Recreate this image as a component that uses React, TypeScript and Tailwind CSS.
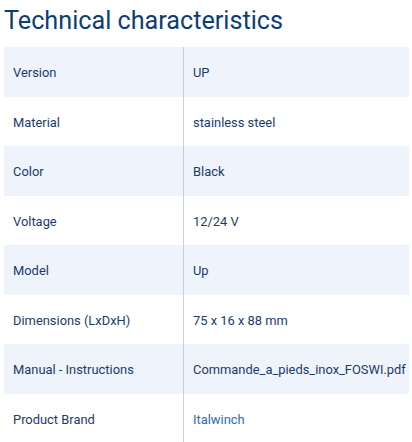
const rows: [string, string, boolean?][] = [
  ["Version", "UP"],
  ["Material", "stainless steel"],
  ["Color", "Black"],
  ["Voltage", "12/24 V"],
  ["Model", "Up"],
  ["Dimensions (LxDxH)", "75 x 16 x 88 mm"],
  ["Manual - Instructions", "Commande_a_pieds_inox_FOSWI.pdf"],
  ["Product Brand", "Italwinch", true],
];

export default function App() {
  return (
    <div className="bg-white w-[412px] h-[442px] overflow-hidden font-['Roboto',sans-serif]">
      <h2 className="pl-[4px] pt-[4px] text-[25.2px] leading-[33px] text-[#0d3d75]">
        Technical characteristics
      </h2>
      <div className="mt-[10px] mx-[4px] w-[405px]">
        {rows.map(([label, value, link], i) => (
          <div
            key={label}
            className={`flex h-[49.5px] items-center pt-[2px] text-[12.9px] text-[#1c3b6b] ${
              i % 2 === 0 ? "bg-[#eef3fc]" : "bg-white"
            }`}
          >
            <div className="w-[179px] pl-[9px]">{label}</div>
            <div className="self-stretch -mt-[2px] w-px bg-[#c3d0e2]" />
            <div className={`pl-[9px] ${link ? "text-[#2c6cb5]" : ""}`}>{value}</div>
          </div>
        ))}
      </div>
    </div>
  );
}
